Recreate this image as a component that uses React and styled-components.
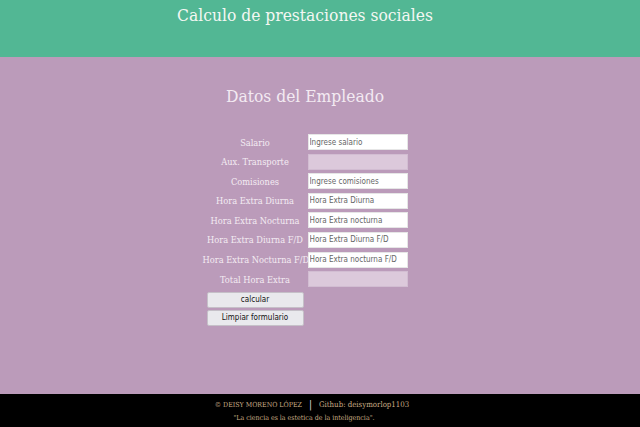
import React from 'react';
import styled, { createGlobalStyle } from 'styled-components';

const GlobalStyle = createGlobalStyle`
  html, body {
    margin: 0;
    padding: 0;
    background: #bb9bba;
  }
  body {
    font-family: "DejaVu Serif Condensed", "DejaVu Serif", serif;
    font-stretch: condensed;
  }
`;

const serif = `"DejaVu Serif Condensed", "DejaVu Serif", serif`;
const sans = `"DejaVu Sans Condensed", "Liberation Sans Narrow", "DejaVu Sans", sans-serif`;

const Page = styled.div`
  display: flex;
  flex-direction: column;
  width: 640px;
  height: 427px;
  background: #bb9bba;
`;

const Header = styled.header`
  background: #52b794;
  height: 57px;
  padding-right: 30px;
  display: flex;
  justify-content: center;
  align-items: flex-start;
`;

const Title = styled.h1`
  margin: 5px 0 0;
  font-family: ${serif};
  font-stretch: condensed;
  font-weight: normal;
  font-size: 17.3px;
  color: #f4f7f3;
`;

const Main = styled.main`
  flex: 1;
  padding-right: 30px;
  display: flex;
  flex-direction: column;
  align-items: center;
`;

const Heading = styled.h2`
  margin: 29px 0 0;
  font-family: ${serif};
  font-stretch: condensed;
  font-weight: normal;
  font-size: 17.3px;
  color: #f3eaf2;
`;

const Form = styled.form`
  margin-top: 28px;
  display: grid;
  grid-template-columns: 105px 100px;
  row-gap: 3.6px;
  align-items: center;
`;

const Label = styled.label`
  font-family: ${serif};
  font-stretch: condensed;
  font-size: 9.2px;
  color: #f4ecf3;
  text-align: center;
  white-space: nowrap;
`;

const Input = styled.input`
  box-sizing: border-box;
  width: 100px;
  height: 16px;
  margin: 0;
  padding: 0 1px;
  border: 1px solid ${({ readOnly }) => (readOnly ? '#d2bdd2' : '#e6e6e6')};
  background: ${({ readOnly }) => (readOnly ? '#dcc9db' : '#ffffff')};
  font-family: ${sans};
  font-stretch: condensed;
  font-size: 8px;
  color: #333;
  outline: none;
  &::placeholder {
    color: #666;
  }
`;

const Buttons = styled.div`
  grid-column: 1 / 2;
  display: flex;
  flex-direction: column;
  gap: 2px;
  padding-left: 4px;
  margin-top: 1px;
`;

const Button = styled.button`
  box-sizing: border-box;
  width: 97px;
  height: 16px;
  margin: 0;
  padding: 0;
  border: 1px solid #c5c0c8;
  border-radius: 2px;
  background: #e9e9ed;
  font-family: ${sans};
  font-stretch: condensed;
  font-size: 8px;
  color: #111;
`;

const Footer = styled.footer`
  background: #000;
  height: 33px;
  padding-right: 16px;
  display: flex;
  flex-direction: column;
  align-items: center;
  justify-content: center;
  gap: 4px;
  font-family: ${serif};
  font-stretch: condensed;
  font-size: 7px;
  color: #c9ac85;
`;

const FooterLine = styled.div`
  display: flex;
  align-items: center;
  gap: 7px;
`;

const Quote = styled.div`
  margin-right: 16px;
`;

const Sep = styled.span`
  font-family: "DejaVu Sans", sans-serif;
  font-size: 10px;
  color: #ddd;
`;

const Github = styled.span`
  font-size: 7.8px;
`;

const fields = [
  { label: 'Salario', placeholder: 'Ingrese salario' },
  { label: 'Aux. Transporte', readOnly: true },
  { label: 'Comisiones', placeholder: 'Ingrese comisiones' },
  { label: 'Hora Extra Diurna', placeholder: 'Hora Extra Diurna' },
  { label: 'Hora Extra Nocturna', placeholder: 'Hora Extra nocturna' },
  { label: 'Hora Extra Diurna F/D', placeholder: 'Hora Extra Diurna F/D' },
  { label: 'Hora Extra Nocturna F/D', placeholder: 'Hora Extra nocturna F/D' },
  { label: 'Total Hora Extra', readOnly: true },
];

const App = () => {
  return (
    <>
      <GlobalStyle />
      <Page>
        <Header>
          <Title>Calculo de prestaciones sociales</Title>
        </Header>
        <Main>
          <Heading>Datos del Empleado</Heading>
          <Form onSubmit={(e) => e.preventDefault()}>
            {fields.map((f, i) => (
              <React.Fragment key={i}>
                <Label>{f.label}</Label>
                <Input placeholder={f.placeholder} readOnly={f.readOnly} />
              </React.Fragment>
            ))}
            <Buttons>
              <Button type="submit">calcular</Button>
              <Button type="reset">Limpiar formulario</Button>
            </Buttons>
          </Form>
        </Main>
        <Footer>
          <FooterLine>
            <span>© DEISY MORENO LÓPEZ</span>
            <Sep>|</Sep>
            <Github>Github: deisymorlop1103</Github>
          </FooterLine>
          <Quote>"La ciencia es la estetica de la inteligencia".</Quote>
        </Footer>
      </Page>
    </>
  );
};

export default App;
